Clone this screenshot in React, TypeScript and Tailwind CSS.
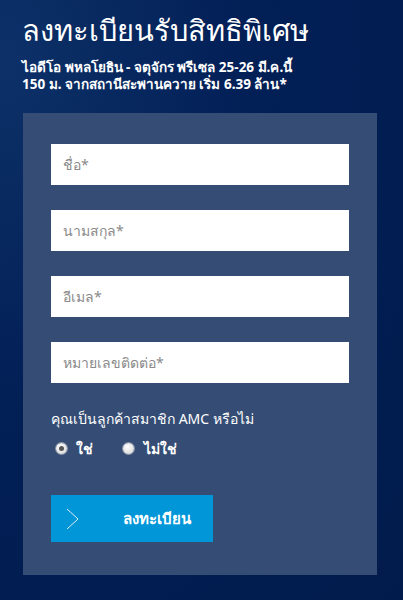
import { useState } from 'react';

const fields = ['ชื่อ*', 'นามสกุล*', 'อีเมล*', 'หมายเลขติดต่อ*'];

export default function App() {
  const [member, setMember] = useState('yes');

  return (
    <div
      className="w-[403px] h-[600px] overflow-hidden bg-[#021f56] bg-[radial-gradient(ellipse_at_0%_10%,#0c3168_0%,#021f56_45%,#011b4c_100%)] text-white"
      style={{ fontFamily: 'Tahoma, "Noto Sans", "DejaVu Sans", sans-serif' }}
    >
      <div className="px-[22px] pt-[10px]">
        <h1 className="text-[29px] leading-[40px] font-normal">ลงทะเบียนรับสิทธิพิเศษ</h1>
        <p className="mt-[9px] text-[13.5px] leading-[17px] font-bold">
          ไอดีโอ พหลโยธิน - จตุจักร พรีเซล 25-26 มี.ค.นี้
          <br />
          150 ม. จากสถานีสะพานควาย เริ่ม 6.39 ล้าน*
        </p>
      </div>

      <div className="ml-[23px] mt-[20px] h-[462px] w-[354px] bg-[#354d74] px-[28px] pt-[31px]">
        <div className="flex flex-col gap-[25px]">
          {fields.map((f) => (
            <input
              key={f}
              placeholder={f}
              className="h-[41px] w-[298px] bg-white px-[12px] text-[14px] text-gray-700 placeholder:text-[#8a8a8a] outline-none"
            />
          ))}
        </div>

        <p className="mt-[27px] text-[14px] leading-[18px]">คุณเป็นลูกค้าสมาชิก AMC หรือไม่</p>
        <div className="mt-[10px] flex items-center text-[14px] font-bold">
          <label className="flex items-center gap-[9px] pl-[5px]" onClick={() => setMember('yes')}>
            <span className="flex h-[11px] w-[11px] items-center justify-center rounded-full bg-[radial-gradient(circle_at_40%_35%,#ffffff,#d0d0d0)] shadow-[0_0_0_1px_#8a94a8]">
              {member === 'yes' && <span className="h-[5px] w-[5px] rounded-full bg-[#555]" />}
            </span>
            ใช่
          </label>
          <label className="ml-[30px] flex items-center gap-[10px]" onClick={() => setMember('no')}>
            <span className="flex h-[11px] w-[11px] items-center justify-center rounded-full bg-[radial-gradient(circle_at_40%_35%,#ffffff,#d0d0d0)] shadow-[0_0_0_1px_#8a94a8]">
              {member === 'no' && <span className="h-[5px] w-[5px] rounded-full bg-[#555]" />}
            </span>
            ไม่ใช่
          </label>
        </div>

        <button className="mt-[36px] flex h-[47px] w-[162px] items-center bg-[#0096d8] pl-[14px] text-[15px] font-bold">
          <svg width="16" height="22" viewBox="0 0 16 22" fill="none" stroke="#d9eef8" strokeWidth="1">
            <path d="M2 1 L13 11 L2 21" />
          </svg>
          <span className="ml-[42px]">ลงทะเบียน</span>
        </button>
      </div>
    </div>
  );
}
